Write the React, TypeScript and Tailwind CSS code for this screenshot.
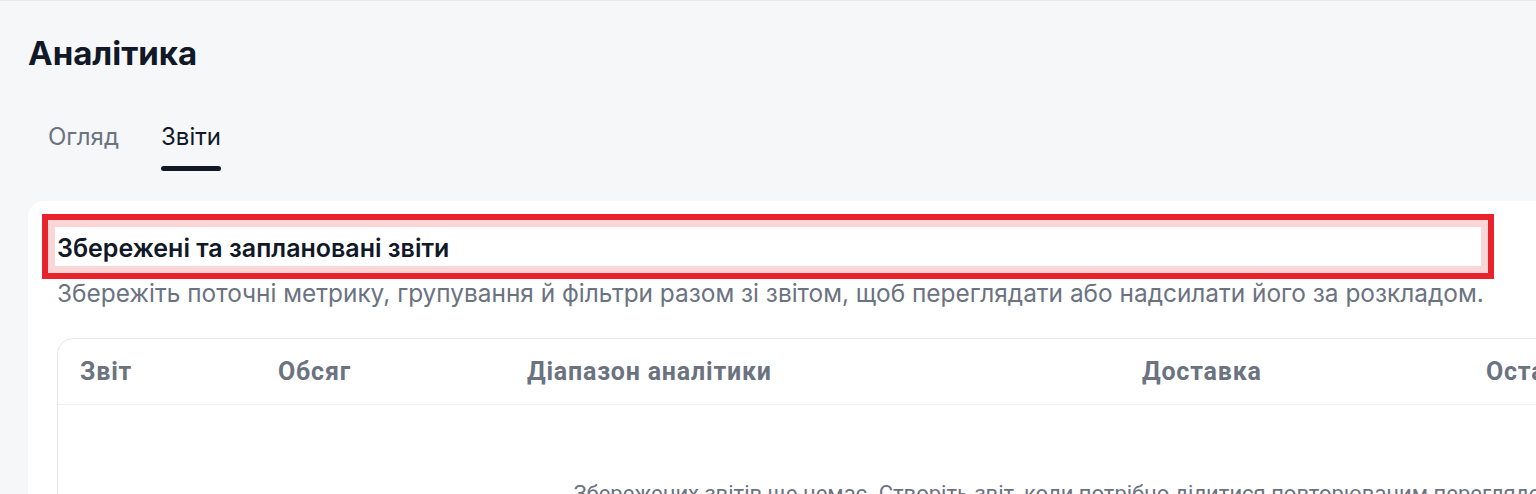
const columns = [
  { label: "Звіт", width: "w-[198px]" },
  { label: "Обсяг", width: "w-[249px]" },
  { label: "Діапазон аналітики", width: "w-[615px]" },
  { label: "Доставка", width: "w-[344px]" },
  { label: "Останнє надсилання", width: "w-[400px]" },
];

export default function App() {
  return (
    <div className="relative h-[494px] w-[1536px] overflow-hidden border-t border-[#e6e8ec] bg-[#f6f7f9] font-['Inter',sans-serif]">
      <div className="pl-[28px] pt-[30px]">
        <h1 className="text-[33px] font-bold leading-[44px] text-[#111827]">Аналітика</h1>

        <div className="mt-[46px] flex gap-[42px] pl-[20px]">
          <div className="pb-[18px] text-[24px] leading-[32px] text-[#6b7280]">Огляд</div>
          <div className="relative pb-[18px] text-[24px] leading-[32px] text-[#111827]">
            Звіти
            <span className="absolute bottom-0 left-0 right-0 h-[5px] rounded-full bg-[#111827]" />
          </div>
        </div>

        <div className="mt-[30px] w-[2400px] rounded-tl-[16px] bg-white pl-[29px] pt-[31px]">
          <h2 className="text-[25px] font-semibold leading-[32px] text-[#111827]">
            Збережені та заплановані звіти
          </h2>
          <p className="mt-[13px] text-[24.4px] leading-[32px] text-[#6b7280]">
            Збережіть поточні метрику, групування й фільтри разом зі звітом, щоб переглядати або надсилати його за розкладом.
          </p>

          <div className="mt-[29px] w-[2262px] rounded-tl-[16px] border border-[#e5e7eb] font-['Roboto',sans-serif]">
            <div className="flex h-[66px] items-center border-b border-[#f0f1f3]">
              {columns.map((c) => (
                <div
                  key={c.label}
                  className={`${c.width} shrink-0 pl-[22px] text-[25px] font-bold tracking-[0.8px] text-[#6b7280]`}
                >
                  {c.label}
                </div>
              ))}
            </div>
            <div className="pt-[74px] text-center text-[22px] leading-[30px] text-[#6b7280]">
              Збережених звітів ще немає. Створіть звіт, коли потрібно ділитися повторюваним переглядом аналітики з командою.
            </div>
          </div>
        </div>
      </div>

      {/* highlight annotation */}
      <div className="absolute left-[42px] top-[213px] h-[65px] w-[1452px] border-[6px] border-[#e8232b]">
        <div className="h-full w-full border-[7px] border-[#fcd6d6]" />
      </div>
    </div>
  );
}
